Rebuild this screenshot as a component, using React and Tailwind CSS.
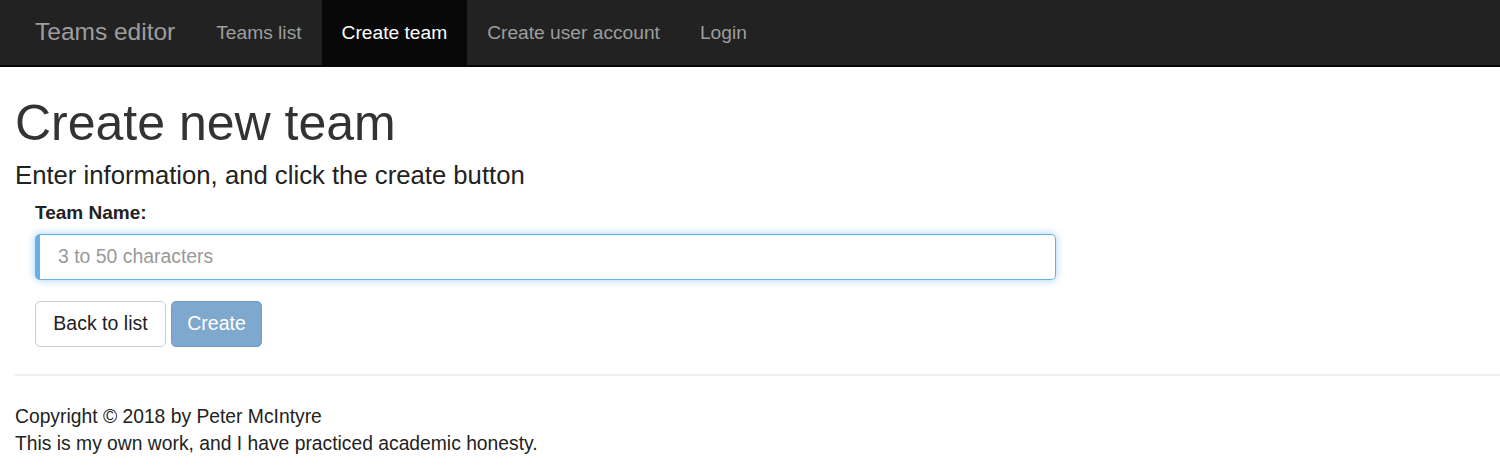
const links = [
  { label: 'Teams list', active: false },
  { label: 'Create team', active: true },
  { label: 'Create user account', active: false },
  { label: 'Login', active: false },
]

export default function App() {
  return (
    <div className="min-h-[472px] bg-white font-['Liberation_Sans',Arial,sans-serif] text-[#333]">
      <nav className="flex h-[67px] items-stretch border-b-2 border-[#080808] bg-[#222] pl-[35px]">
        <div className="flex items-center pr-[21px] text-[24.5px] text-[#9d9d9d]">Teams editor</div>
        <ul className="flex items-stretch">
          {links.map((link) => (
            <li
              className={
                link.active
                  ? 'flex items-center bg-[#080808] px-[20px] pt-[2px] text-[19.2px] text-white'
                  : 'flex items-center px-[20px] pt-[2px] text-[19.2px] text-[#9d9d9d]'
              }
              key={link.label}
            >
              {link.label}
            </li>
          ))}
        </ul>
      </nav>

      <div className="pl-[15px]">
        <h1 className="mt-[29px] text-[50px] leading-[54px] text-[#333]">Create new team</h1>
        <h4 className="mt-[9px] text-[25.7px] leading-[32px] text-[#222]">Enter information, and click the create button</h4>

        <div className="mt-[9px] px-[20px]">
          <label className="block text-[19px] leading-[26px] font-bold text-[#222]">Team Name:</label>
          <div className="mt-[8px] flex h-[46px] w-[1021px] items-center rounded-[5px] border border-[#66afe9] border-l-[5px] pl-[18px] shadow-[0_0_8px_rgba(102,175,233,0.6)]">
            <span className="text-[19.4px] text-[#999]">3 to 50 characters</span>
          </div>
          <div className="mt-[21px] flex gap-[5px]">
            <button
              className="h-[46px] w-[131px] rounded-[5px] border border-[#ccc] bg-white text-[19.5px] text-[#222]"
              type="button"
            >
              Back to list
            </button>
            <button
              className="h-[46px] w-[91px] rounded-[5px] border border-[#6f9ccb] bg-[#7fa8cf] text-[19.5px] text-white"
              type="button"
            >
              Create
            </button>
          </div>
        </div>

        <hr className="mt-[27px] border-t-2 border-[#eee]" />

        <div className="mt-[27px] text-[19.3px] leading-[27px] text-[#222]">
          <p>Copyright © 2018 by Peter McIntyre</p>
          <p>This is my own work, and I have practiced academic honesty.</p>
        </div>
      </div>
    </div>
  )
}
